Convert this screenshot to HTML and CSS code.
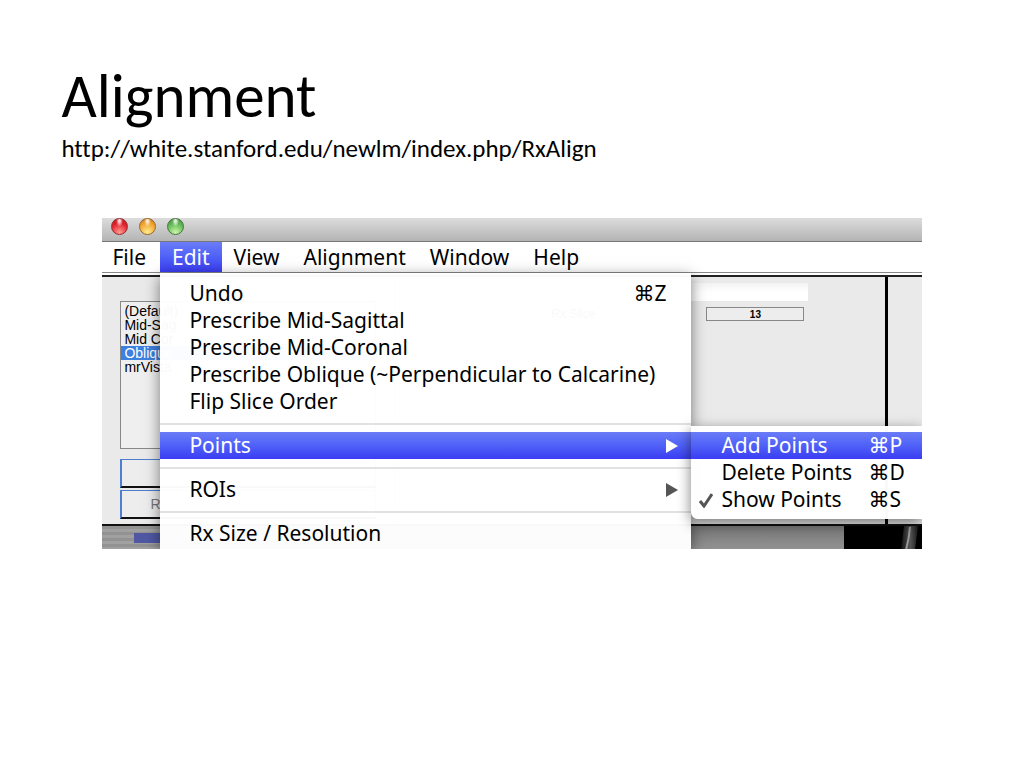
FILE: index.html
```html
<!DOCTYPE html>
<html lang="en">
<head>
<meta charset="utf-8">
<title>Alignment</title>
<link rel="stylesheet" href="styles.css">
</head>
<body>
<main class="slide">
  <header class="heading">
    <h1 class="title">Alignment</h1>
    <a class="link" href="http://white.stanford.edu/newlm/index.php/RxAlign">http://white.stanford.edu/newlm/index.php/RxAlign</a>
  </header>

  <section class="window" aria-label="Alignment window">
    <div class="titlebar">
      <button class="light red" aria-label="Close"></button>
      <button class="light amber" aria-label="Minimize"></button>
      <button class="light green" aria-label="Zoom"></button>
    </div>
    <nav class="menubar">
      <button class="menu-title">File</button>
      <button class="menu-title open">Edit</button>
      <button class="menu-title">View</button>
      <button class="menu-title">Alignment</button>
      <button class="menu-title">Window</button>
      <button class="menu-title">Help</button>
    </nav>

    <div class="workspace">
      <div class="panes">
        <div class="pane list-pane">
          <ul class="list">
            <li>(Default)</li>
            <li>Mid-Sag</li>
            <li>Mid Cor</li>
            <li class="selected">Oblique</li>
            <li>mrVista</li>
          </ul>
          <div class="buttons">
            <button class="push" aria-label="Add"></button>
            <button class="push">R</button>
          </div>
        </div>
        <div class="pane slice-pane">
          <div class="strip"></div>
          <div class="slice-row">
            <label for="slice">Rx Slice</label>
            <input id="slice" class="slice" type="text" value="13">
          </div>
        </div>
        <div class="pane side-pane"></div>
      </div>
      <div class="desktop">
        <div class="thumbs"><span class="thumb"></span></div>
        <div class="scan">
          <svg class="scan-art" viewBox="0 0 78 24" preserveAspectRatio="xMinYMin slice" aria-hidden="true">
            <defs>
              <linearGradient id="bone" x1="0" x2="1" y1="0" y2="0">
                <stop offset="0" stop-color="#111"/>
                <stop offset=".55" stop-color="#555"/>
                <stop offset="1" stop-color="#1a1a1a"/>
              </linearGradient>
            </defs>
            <path d="M60 0h14l-3 24H57z" fill="url(#bone)"/>
            <path d="M66 1q-1 12-4 23" fill="none" stroke="#999" stroke-width="2"/>
          </svg>
        </div>
      </div>

      <div class="menu edit-menu" role="menu">
        <button class="item" role="menuitem"><span>Undo</span><kbd>⌘Z</kbd></button>
        <button class="item" role="menuitem">Prescribe Mid-Sagittal</button>
        <button class="item" role="menuitem">Prescribe Mid-Coronal</button>
        <button class="item" role="menuitem">Prescribe Oblique (~Perpendicular to Calcarine)</button>
        <button class="item" role="menuitem">Flip Slice Order</button>
        <hr class="rule">
        <button class="item active" role="menuitem"><span>Points</span>
          <svg class="arrow" viewBox="0 0 12 14" aria-hidden="true"><path d="M0 0l12 7-12 7z"/></svg></button>
        <hr class="rule">
        <button class="item" role="menuitem"><span>ROIs</span>
          <svg class="arrow" viewBox="0 0 12 14" aria-hidden="true"><path d="M0 0l12 7-12 7z"/></svg></button>
        <hr class="rule">
        <button class="item" role="menuitem">Rx Size / Resolution</button>
      </div>

      <div class="menu sub-menu" role="menu">
        <button class="item active" role="menuitem"><span class="check"></span><span class="name">Add Points</span><kbd>⌘P</kbd></button>
        <button class="item" role="menuitem"><span class="check"></span><span class="name">Delete Points</span><kbd>⌘D</kbd></button>
        <button class="item" role="menuitem"><span class="check"><svg viewBox="0 0 14 16" width="14" height="16" aria-hidden="true"><path d="M1 9l4 5L13 2" fill="none" stroke="#555" stroke-width="3"/></svg></span><span class="name">Show Points</span><kbd>⌘S</kbd></button>
      </div>
    </div>
  </section>
</main>
</body>
</html>
```
FILE: styles.css
```css
* { box-sizing: border-box; }

body {
  margin: 0;
  background: #fff;
  color: #000;
  font-family: "Noto Sans", "Open Sans", sans-serif;
}

button, input, kbd { font: inherit; color: inherit; }
button { border: 0; background: none; padding: 0; text-align: left; }

.slide { padding: 62px 10%; }

.heading {
  display: flex;
  flex-direction: column;
  align-items: flex-start;
  margin-left: -41px;
  height: 156px;
  font-family: Carlito, Calibri, Lato, sans-serif;
  font-variant-ligatures: none;
}
.title { margin: 0; font-size: 61px; font-weight: 400; line-height: 68px; }
.link { color: #000; font-size: 25px; line-height: 38px; text-decoration: none; }

.window { overflow: hidden; font-size: 21px; }

.titlebar {
  display: flex;
  gap: 11px;
  height: 24px;
  padding: 0 9px;
  border-bottom: 1px solid #777;
  background: linear-gradient(#dcdcdc, #b4b4b4);
}
.light {
  width: 17px;
  height: 17px;
  border: 1px solid #666;
  border-radius: 50%;
}
.red { border-color: #943030; background: radial-gradient(ellipse at 50% 12%, #fffc 0 8%, transparent 32%), radial-gradient(circle at 50% 90%, #ff9c94, #e0222c 60%, #b41822); }
.amber { border-color: #98662a; background: radial-gradient(ellipse at 50% 12%, #fffc 0 8%, transparent 32%), radial-gradient(circle at 50% 90%, #ffee90, #f2a530 60%, #c27818); }
.green { border-color: #45753d; background: radial-gradient(ellipse at 50% 12%, #fffc 0 8%, transparent 32%), radial-gradient(circle at 50% 90%, #ccf8a8, #62b856 60%, #438a3c); }

.menubar { display: flex; height: 30px; background: #fff; }
.menu-title { padding: 0 12px; line-height: 31px; }
.menu-title:first-child { padding: 0 14px 0 10px; }
.open, .active {
  color: #fff;
  background: linear-gradient(#6a7cf6, #5264f8 45%, #3a3df2);
}

.workspace {
  position: relative;
  border-top: 1px solid #888;
  padding-top: 2px;
}
.panes {
  display: grid;
  grid-template-columns: 293px 493px 1fr;
  height: 251px;
  border-top: 2px solid #222;
  border-bottom: 2px solid #111;
  background: #eaeaea;
}
.list-pane { padding: 24px 18px 0; border-right: 1px solid #aaa; }
.list {
  height: 148px;
  margin: 0 0 10px;
  padding: 2px 0;
  border: 1px solid #888;
  background: #efefef;
  list-style: none;
  font: 14px/14px "Liberation Sans", Arial, sans-serif;
}
.list li { padding-left: 3px; }
.list .selected { color: #fff; background: #3d80df; }
.buttons { display: grid; gap: 2px; }
.push {
  height: 29px;
  padding-left: 28px;
  border: 2px solid #4c7fd0;
  border-width: 1px 1px 2px 2px;
  border-bottom-color: #111;
  background: #ededed;
  color: #777;
  font: 14px/24px "Liberation Sans", Arial, sans-serif;
}
.slice-pane { padding: 6px 77px 0 60px; border-right: 3px solid #000; }
.strip { height: 18px; margin-bottom: 6px; background: linear-gradient(#f3f3f3, #fff 50%); }
.slice-row {
  display: flex;
  justify-content: space-between;
  padding: 0 4px 0 96px;
  font: 12px/14px "Liberation Sans", Arial, sans-serif;
}
.slice {
  width: 98px;
  height: 14px;
  padding: 0;
  border: 1px solid #888;
  background: #ededed;
  font: bold 10px/12px "Liberation Sans", Arial, sans-serif;
  text-align: center;
}

.desktop {
  display: grid;
  grid-template-columns: 742px 1fr;
  height: 23px;
  background: linear-gradient(#777, #929292);
}
.thumbs { padding: 7px 32px; background: repeating-linear-gradient(#929292 0 3px, #a0a0a0 3px 6px) 0 0 / 58px 100% no-repeat; }
.thumb { display: block; width: 26px; height: 10px; background: #5058a4; }
.scan { background: #000; overflow: hidden; }
.scan-art { display: block; width: 100%; height: 24px; }

.menu {
  position: absolute;
  background: rgba(255, 255, 255, .975);
  box-shadow: 0 4px 14px rgba(0, 0, 0, .5);
}
.edit-menu { left: 58px; top: 0; bottom: 0; width: 531px; padding-top: 7px; }
.sub-menu { left: 589px; right: 0; top: 153px; padding: 6px 0; border-radius: 0 0 0 7px; }

.item {
  display: flex;
  align-items: center;
  width: 100%;
  height: 27px;
  line-height: 27px;
  white-space: nowrap;
}
.edit-menu .item { justify-content: space-between; padding: 0 13px 0 29px; }
.edit-menu kbd { padding-right: 12px; }
.rule { height: 17px; margin: 0; border: 0; background: linear-gradient(#e2e2e2, #e2e2e2) 0 8px / 100% 2px no-repeat; }
.arrow { width: 12px; height: 14px; fill: #555; }
.active .arrow { fill: #fff; }
.check { display: flex; width: 30px; padding-left: 8px; }
.name { width: 147px; }
kbd { font-family: "Noto Sans", "DejaVu Sans", sans-serif; }
```
